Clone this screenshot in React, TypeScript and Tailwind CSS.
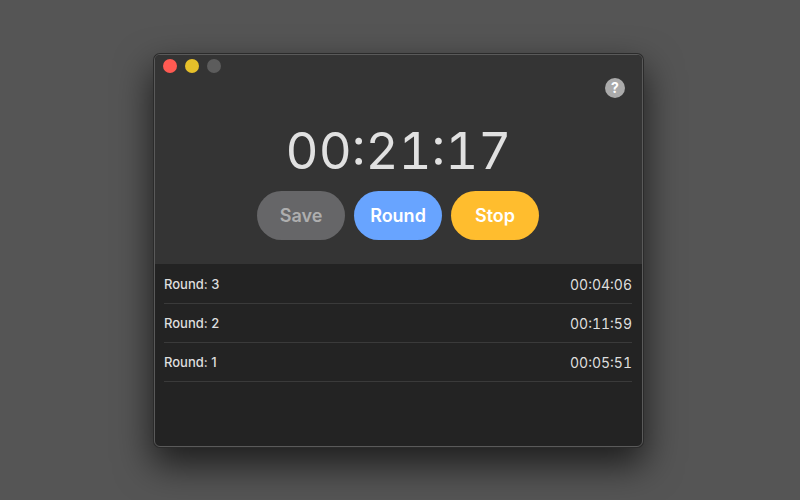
import React, { useState } from 'react'

interface Round {
  id: number
  time: string
}

interface ControlButtonProps {
  label: string
  className: string
  disabled?: boolean
  onClick?: () => void
}

const initialRounds: Round[] = [
  { id: 3, time: '00:04:06' },
  { id: 2, time: '00:11:59' },
  { id: 1, time: '00:05:51' }
]

const ControlButton: React.FC<ControlButtonProps> = ({
  label,
  className,
  disabled = false,
  onClick
}) => (
  <button
    type="button"
    disabled={disabled}
    onClick={onClick}
    className={`h-[49px] w-22 rounded-full text-lg font-semibold ${className}`}
  >
    {label}
  </button>
)

const TitleBar: React.FC = () => (
  <div className="flex gap-2 px-2 pt-1">
    <button type="button" aria-label="Close" className="size-3.5 rounded-full bg-[#ff5a52]" />
    <button type="button" aria-label="Minimize" className="size-3.5 rounded-full bg-[#e6c02a]" />
    <button type="button" aria-label="Zoom" disabled className="size-3.5 rounded-full bg-[#5c5c5c]" />
  </div>
)

const RoundTable: React.FC<{ rounds: Round[] }> = ({ rounds }) => (
  <table className="w-full border-separate border-spacing-0 text-[#dedede]">
    <tbody>
      {rounds.map((round) => (
        <tr key={round.id}>
          <th scope="row" className="h-[39px] border-b border-[#3a3a3a] p-0 pt-0.5 text-left text-[13px] font-medium">
            Round: {round.id}
          </th>
          <td className="h-[39px] border-b border-[#3a3a3a] p-0 pt-0.5 text-right text-sm tabular-nums">
            {round.time}
          </td>
        </tr>
      ))}
    </tbody>
  </table>
)

export default function App() {
  const [rounds, setRounds] = useState<Round[]>(initialRounds)
  const [isRunning, setIsRunning] = useState(true)

  const handleRound = () => {
    setRounds([{ id: rounds.length + 1, time: '00:00:00' }, ...rounds])
  }

  return (
    <main className="flex min-h-screen items-center justify-center bg-[#555555] pt-px pr-[3px] font-['Inter',sans-serif]">
      <div className="flex min-h-[393px] w-full max-w-[489px] flex-col overflow-hidden rounded-md border border-[#5a5a5a] bg-[#232323] shadow-[0_0_0_1px_#2b2b2b,0_16px_36px_2px_rgba(0,0,0,0.65)]">
        {/* Timer */}
        <header className="bg-[#343434] pb-6">
          <TitleBar />
          <div className="flex justify-end pr-[17px]">
            <button
              type="button"
              aria-label="Help"
              className="mt-[5px] size-5 rounded-full bg-[#aaaaaa] text-sm font-bold text-white"
            >
              ?
            </button>
          </div>
          <time className="mt-6 block text-center text-[51px] leading-[58px] text-[#e1e1e1] tabular-nums">
            00:21:17
          </time>
          <div className="mt-[11px] flex justify-center gap-[9px] pr-px">
            <ControlButton label="Save" disabled className="bg-[#666668] text-[#aeaeae]" />
            <ControlButton
              label="Round"
              disabled={!isRunning}
              onClick={handleRound}
              className="bg-[#68a4ff] text-white"
            />
            <ControlButton
              label={isRunning ? 'Stop' : 'Start'}
              onClick={() => setIsRunning(!isRunning)}
              className="bg-[#ffbd2e] text-white"
            />
          </div>
        </header>

        {/* Rounds */}
        <section aria-label="Rounds" className="pt-px pr-[10px] pl-[9px]">
          <RoundTable rounds={rounds} />
        </section>
      </div>
    </main>
  )
}
